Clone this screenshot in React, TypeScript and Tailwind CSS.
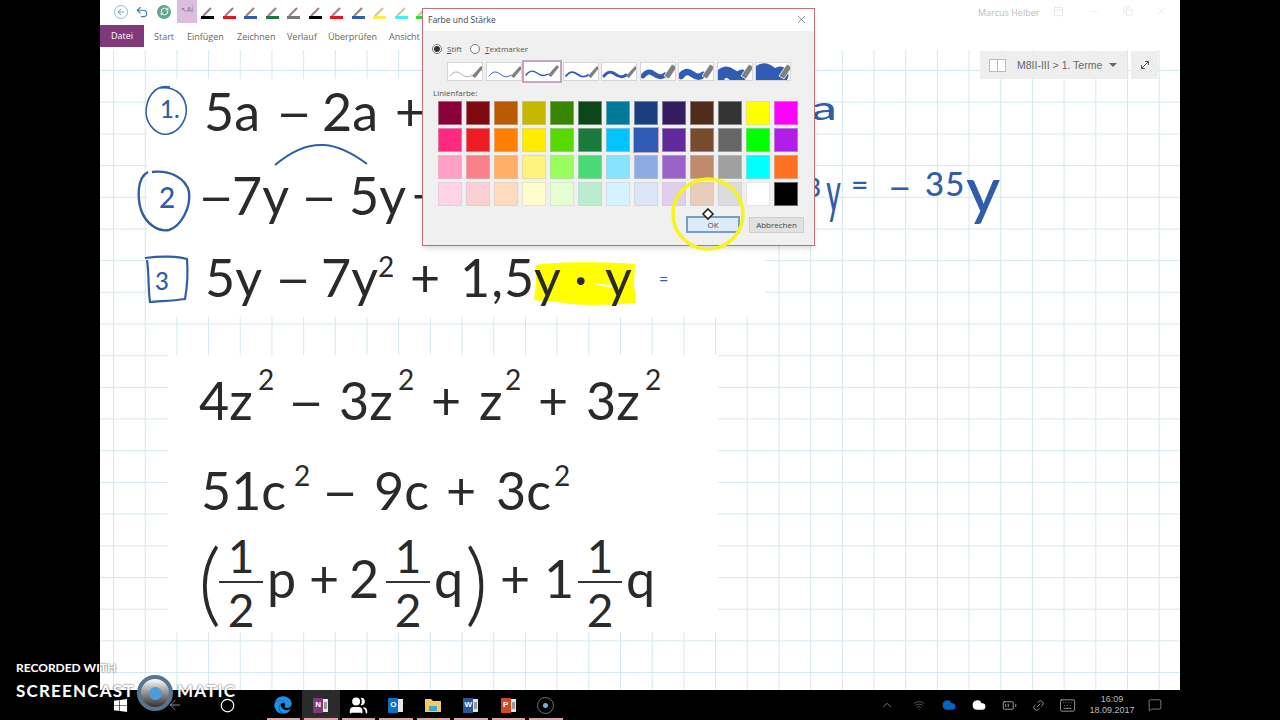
import React from 'react';
import { ArrowLeft, ChevronUp, Cloud, Keyboard, MessageSquare, Minus, RefreshCw, Undo2, Users, Wifi, X, Link2, BatteryMedium, Copy, PanelTop, MoveDiagonal, Circle } from 'lucide-react';
import { FaEdge, FaWindows } from 'react-icons/fa';

const PEN_COLORS = [
  'bg-[#000000]', 'bg-[#e8141c]', 'bg-[#2f5db5]', 'bg-[#197a3c]', 'bg-[#777777]', 'bg-[#000000]',
  'bg-[#e8141c]', 'bg-[#2f5db5]', 'bg-[#ffee44]', 'bg-[#44eeff]', 'bg-[#33dd33]',
];

const TABS = [
  { label: 'Start', cls: 'w-[33px]' },
  { label: 'Einfügen', cls: 'w-[50px]' },
  { label: 'Zeichnen', cls: 'w-[50px]' },
  { label: 'Verlauf', cls: 'w-[41px]' },
  { label: 'Überprüfen', cls: 'w-[61px]' },
  { label: 'Ansicht', cls: 'w-[33px]' },
];

const SWATCHES = [
  ['bg-[#8a0038]', 'bg-[#7f0a12]', 'bg-[#b95b00]', 'bg-[#c6b800]', 'bg-[#3a8500]', 'bg-[#0f4619]', 'bg-[#007a9a]', 'bg-[#1b3f7e]', 'bg-[#351c5e]', 'bg-[#4f2c1c]', 'bg-[#333333]', 'bg-[#ffff00]', 'bg-[#ff00ff]'],
  ['bg-[#ff2a7f]', 'bg-[#ee1c25]', 'bg-[#ff7f00]', 'bg-[#ffec00]', 'bg-[#57d900]', 'bg-[#197a3c]', 'bg-[#00c4ff]', 'bg-[#2f5db5]', 'bg-[#60299c]', 'bg-[#764b30]', 'bg-[#666666]', 'bg-[#00ff00]', 'bg-[#b01ee8]'],
  ['bg-[#ff9fc6]', 'bg-[#f98088]', 'bg-[#ffaf66]', 'bg-[#fff37f]', 'bg-[#99ff5c]', 'bg-[#4bd977]', 'bg-[#88e3ff]', 'bg-[#8cabe2]', 'bg-[#9b63c9]', 'bg-[#c08a6d]', 'bg-[#a0a0a0]', 'bg-[#00ffff]', 'bg-[#ff7020]'],
  ['bg-[#ffd4e6]', 'bg-[#fbd0d3]', 'bg-[#ffdcc0]', 'bg-[#fffdcc]', 'bg-[#e5ffd2]', 'bg-[#bcecd0]', 'bg-[#d2f3ff]', 'bg-[#dbe5f6]', 'bg-[#e1cdee]', 'bg-[#e8cdbd]', 'bg-[#dcdcdc]', 'bg-[#ffffff]', 'bg-[#000000]'],
];

const THICKNESS = [0.6, 1, 1.5, 2, 3, 5, 6.5, 11, 17];

const T = 'absolute text-[52px] leading-none text-[#2a2a2a] font-["Lato",sans-serif] whitespace-pre';
const M = `${T} scale-x-[1.25]`;
const S = 'absolute text-[28px] leading-none text-[#2a2a2a] font-["Lato",sans-serif]';
const INK = 'absolute leading-none text-[#2f5da8] font-["Lato",sans-serif] font-medium whitespace-pre';

function PenThumb({ width, index }: { width: number; index: number }) {
  const selected = index === 2;
  const big = index >= 5;
  return (
    <div className={`relative w-[36px] h-[19px] overflow-hidden bg-white ${selected ? 'outline-2 outline-[#c9a3c4]' : 'border border-[#d6d6d6]'}`}>
      <svg width="36" height="19" viewBox="0 0 36 19" className="absolute left-0 top-0">
        <path
          d="M2 13 C6 8 9 8 13 11 S20 15 24 12"
          fill="none"
          stroke={index === 0 ? '#777777' : '#2f5db5'}
          strokeWidth={width}
          strokeLinecap="round"
        />
        <path
          d={big ? 'M23 13 L31 1 L36 4 L28 16 Z' : 'M24 13 L33 3 L35 5 L27 15 Z'}
          fill="#808080"
          stroke={big ? '#ffffff' : 'none'}
          strokeWidth="0.8"
        />
      </svg>
    </div>
  );
}

function OfficeTile({ letter, color, lines }: { letter: string; color: string; lines?: boolean }) {
  return (
    <div className="relative w-[15px] h-[15px]">
      <div className="absolute right-0 top-[1px] w-[10px] h-[13px] bg-white/90" />
      <div className={`absolute left-0 top-0 w-[10px] h-[15px] ${color} flex items-center justify-center text-[8px] font-bold text-white font-["Liberation_Sans",sans-serif]`}>
        {letter}
      </div>
      {lines && <div className="absolute right-[1px] top-[4px] w-[3px] h-[7px] bg-[#999999]" />}
    </div>
  );
}

function Frac({ cls }: { cls: string }) {
  return (
    <div className={`absolute flex flex-col items-center w-[44px] text-[46px] leading-none text-[#2a2a2a] font-["Lato",sans-serif] ${cls}`}>
      <span className="h-[48px]">1</span>
      <div className="w-full h-[2px] bg-[#333333]" />
      <span className="mt-[4px]">2</span>
    </div>
  );
}

function TaskItem({ active, children }: { active?: boolean; children: React.ReactNode }) {
  return (
    <div className={`relative flex items-center justify-center h-full w-[37.5px] ${active ? 'bg-[#2b2b2b]' : ''}`}>
      {children}
      <div className="absolute left-[2px] right-[2px] bottom-0 h-[2px] bg-[#d8a8a8]" />
    </div>
  );
}

export default function App() {
  return (
    <div className='relative w-[1280px] h-[720px] overflow-hidden bg-black flex flex-col font-["Open_Sans",sans-serif]'>
      <div className="flex-1 flex min-h-0">
        <div className="w-[100px] bg-black" />
        <div className="flex-1 flex flex-col bg-white min-w-0">
          {/* title + ribbon */}
          <div className="relative h-[50px] shrink-0">
            <div className="h-[25px] flex items-center pl-[14px]">
              <div className="w-[14px] h-[14px] rounded-full border border-[#9bb8cf] bg-white flex items-center justify-center mr-[7px] -mt-[2px]">
                <ArrowLeft size={10} strokeWidth={2} className="text-[#5b8fb8]" />
              </div>
              <Undo2 size={14} strokeWidth={2} className="text-[#3f7da8] mr-[8px] -mt-[2px]" />
              <div className="w-[14px] h-[14px] rounded-full bg-[#5fa690] flex items-center justify-center mr-[6px] -mt-[2px]">
                <RefreshCw size={9} strokeWidth={2.5} className="text-white" />
              </div>
              <div className="w-[20px] h-[23px] bg-[#dcbcdf] -mt-[2px] mr-[4px] flex items-start justify-center text-[7px] text-[#777777] pt-[5px]">
                ↖Aİ
              </div>
              <div className="flex gap-[8.5px]">
                {PEN_COLORS.map((c, i) => (
                  <div key={i} className="relative w-[13px] h-[13px]">
                    <svg width="13" height="11" viewBox="0 0 13 11" className="absolute left-0 top-0">
                      <path d="M2 10 L10 2" stroke={i > 7 ? '#d8c48a' : '#a08078'} strokeWidth="2.2" />
                    </svg>
                    <div className={`absolute left-0 bottom-0 w-[13px] h-[3px] ${c}`} />
                  </div>
                ))}
              </div>
            </div>
            <div className="h-[22px] flex items-center text-[9px] text-[#666666]">
              <div className="w-[44px] h-full bg-[#80397b] text-white flex items-center justify-center">Datei</div>
              <div className="w-[10px]" />
              {TABS.map((t) => (
                <div key={t.label} className={`${t.cls} text-left pt-[1px]`}>{t.label}</div>
              ))}
            </div>
            <span className="absolute left-[878px] top-[6px] text-[9px] text-[#bbbbbb]">Marcus Helber</span>
            <PanelTop size={11} strokeWidth={1} className="absolute left-[953px] top-[6px] text-[#cccccc]" />
            <Minus size={11} strokeWidth={1} className="absolute left-[989px] top-[6px] text-[#dddddd]" />
            <Copy size={10} strokeWidth={1} className="absolute left-[1023px] top-[6px] text-[#cccccc]" />
            <X size={12} strokeWidth={1} className="absolute left-[1055px] top-[5px] text-[#dddddd]" />
          </div>

          {/* page canvas */}
          <div className="relative flex-1 bg-white bg-[linear-gradient(to_right,#d5e8ef_1px,transparent_1px),linear-gradient(to_bottom,#d5e8ef_1px,transparent_1px)] bg-[size:31.7px_31.7px] bg-[position:13px_20px]">
            <div className="absolute left-[47px] top-[29px] w-[618px] h-[238px] bg-white" />
            <div className="absolute left-[68px] top-[305px] w-[550px] h-[277px] bg-white" />

            <svg width="1080" height="640" viewBox="100 50 1080 640" className="absolute left-0 top-0" fill="none">
              <path d="M536 265 C560 261 610 262 635 264 L634 284 L636 303 C600 306 570 305 566 303 L534 300 L536 284 Z" fill="#ffff00" />
              <path d="M590 283 L612 285 L612 288 Z" fill="#ffffff" />
              <path d="M170 87 C153 84 146 100 146 113 C147 126 158 136 168 134 C180 132 188 118 186 106 C184 94 174 86 160 88" stroke="#2f5da8" strokeWidth="1.6" />
              <path d="M148 172 C136 178 138 200 141 210 C146 224 158 232 169 230 C181 226 191 208 189 192 C186 178 170 170 152 172" stroke="#2f5da8" strokeWidth="2.4" />
              <path d="M145 258 C160 256 178 256 187 259 C188 272 187 288 185 299 C172 301 160 301 150 302 C148 288 149 272 147 260" stroke="#2f5da8" strokeWidth="2.2" />
              <path d="M275 165 C295 148 310 144 324 145 C340 146 355 155 367 164" stroke="#2f5da8" strokeWidth="2" />
            </svg>

            {/* first block */}
            <span className={`${T} left-[104px] top-[35px]`}>5a</span>
            <span className={`${M} left-[179px] top-[35px]`}>–</span>
            <span className={`${T} left-[222px] top-[35px]`}>2a</span>
            <span className={`${T} left-[295px] top-[35px]`}>+</span>

            <span className={`${M} left-[101px] top-[119px]`}>–</span>
            <span className={`${T} left-[132px] top-[119px]`}>7y</span>
            <span className={`${M} left-[204px] top-[119px]`}>–</span>
            <span className={`${T} left-[249px] top-[119px]`}>5y</span>
            <span className={`${T} left-[312px] top-[119px]`}>+</span>

            <span className={`${T} left-[105px] top-[201px]`}>5y</span>
            <span className={`${M} left-[178px] top-[201px]`}>–</span>
            <span className={`${T} left-[221px] top-[201px]`}>7y</span>
            <span className={`${S} left-[278px] top-[202px]`}>2</span>
            <span className={`${T} left-[310px] top-[201px]`}>+</span>
            <span className={`${T} left-[360px] top-[201px] tracking-[1px]`}>1,5</span>
            <span className={`${T} left-[434px] top-[201px]`}>y</span>
            <span className={`${T} left-[474px] top-[201px]`}>·</span>
            <span className={`${T} left-[505px] top-[201px]`}>y</span>

            <span className={`${INK} left-[60px] top-[47px] text-[24px]`}>1.</span>
            <span className={`${INK} left-[59px] top-[133px] text-[28px]`}>2</span>
            <span className={`${INK} left-[55px] top-[219px] text-[24px]`}>3</span>
            <span className={`${INK} left-[559px] top-[221px] text-[16px] font-normal`}>=</span>

            <span className={`${INK} left-[716px] top-[42px] text-[32px] scale-x-[1.6]`}>a</span>
            <span className={`${INK} left-[706px] top-[124px] text-[26px]`}>3</span>
            <span className={`${INK} left-[719px] top-[113px] text-[56px] scale-x-50`}>y</span>
            <span className={`${INK} left-[751px] top-[119px] text-[30px]`}>=</span>
            <span className={`${M} !text-[#2f5da8] !text-[34px] left-[790px] top-[119px] font-medium`}>–</span>
            <span className={`${INK} left-[825px] top-[117px] text-[33px] tracking-[1px]`}>35</span>
            <span className={`${INK} left-[866px] top-[105px] text-[66px]`}>y</span>

            {/* second block */}
            <span className={`${T} left-[99px] top-[324px]`}>4z</span>
            <span className={`${S} left-[158px] top-[315px]`}>2</span>
            <span className={`${M} left-[191px] top-[324px]`}>–</span>
            <span className={`${T} left-[239px] top-[324px]`}>3z</span>
            <span className={`${S} left-[298px] top-[315px]`}>2</span>
            <span className={`${T} left-[331px] top-[324px]`}>+</span>
            <span className={`${T} left-[379px] top-[324px]`}>z</span>
            <span className={`${S} left-[405px] top-[315px]`}>2</span>
            <span className={`${T} left-[438px] top-[324px]`}>+</span>
            <span className={`${T} left-[486px] top-[324px]`}>3z</span>
            <span className={`${S} left-[545px] top-[315px]`}>2</span>

            <span className={`${T} left-[101px] top-[414px]`}>51c</span>
            <span className={`${S} left-[194px] top-[411px]`}>2</span>
            <span className={`${M} left-[225px] top-[414px]`}>–</span>
            <span className={`${T} left-[274px] top-[414px]`}>9c</span>
            <span className={`${T} left-[346px] top-[414px]`}>+</span>
            <span className={`${T} left-[396px] top-[414px]`}>3c</span>
            <span className={`${S} left-[454px] top-[411px]`}>2</span>

            <span className={`${T} left-[98px] top-[485px] text-[90px] font-light`}>(</span>
            <Frac cls="left-[119px] top-[483px]" />
            <span className={`${T} left-[167px] top-[502px]`}>p</span>
            <span className={`${T} left-[209px] top-[502px]`}>+</span>
            <span className={`${T} left-[249px] top-[502px]`}>2</span>
            <Frac cls="left-[286px] top-[483px]" />
            <span className={`${T} left-[334px] top-[502px]`}>q</span>
            <span className={`${T} left-[365px] top-[485px] text-[90px] font-light`}>)</span>
            <span className={`${T} left-[400px] top-[502px]`}>+</span>
            <span className={`${T} left-[444px] top-[502px]`}>1</span>
            <Frac cls="left-[478px] top-[483px]" />
            <span className={`${T} left-[526px] top-[502px]`}>q</span>

            {/* notebook picker */}
            <div className="absolute left-[880px] top-[1px] flex gap-[4px] text-[#666666]">
              <div className="w-[147px] h-[28px] bg-[#eeeeee] flex items-center pl-[9px]">
                <div className="w-[17px] h-[13px] bg-white border border-[#bbbbbb] flex justify-center">
                  <div className="w-px h-full bg-[#bbbbbb]" />
                </div>
                <span className='ml-[11px] pt-[1px] text-[10.5px] font-["Liberation_Sans",sans-serif]'>M8II-III &gt; 1. Terme</span>
                <div className="ml-[7px] w-0 h-0 border-l-[4px] border-r-[4px] border-t-[4px] border-l-transparent border-r-transparent border-t-[#666666]" />
              </div>
              <div className="w-[27px] h-[28px] bg-[#eeeeee] flex items-center justify-center">
                <MoveDiagonal size={12} strokeWidth={2} className="text-[#555555]" />
              </div>
            </div>
          </div>
        </div>
        <div className="w-[100px] bg-black" />
      </div>

      {/* taskbar */}
      <div className="h-[30px] shrink-0 bg-black flex items-center text-white">
        <div className="w-[128px] flex justify-end">
          <FaWindows size={15} />
        </div>
        <div className="w-[39px]" />
        <ArrowLeft size={16} strokeWidth={1} className="text-[#cccccc]" />
        <div className="w-[37px]" />
        <Circle size={15} strokeWidth={2} />
        <div className="w-[29.5px]" />
        <div className="flex h-full">
          <TaskItem><FaEdge size={18} className="text-[#1e90e8]" /></TaskItem>
          <TaskItem active><OfficeTile letter="N" color="bg-[#80397b]" lines /></TaskItem>
          <TaskItem><Users size={19} fill="#ffffff" className="text-white" /></TaskItem>
          <TaskItem><OfficeTile letter="O" color="bg-[#0a72c6]" /></TaskItem>
          <TaskItem>
            <svg width="16" height="14" viewBox="0 0 16 14">
              <path d="M0 1 H6 L8 3 H16 V14 H0 Z" fill="#f2cc62" />
              <rect x="4" y="8" width="8" height="5" fill="#3fa9c9" />
            </svg>
          </TaskItem>
          <TaskItem><OfficeTile letter="W" color="bg-[#2b579a]" lines /></TaskItem>
          <TaskItem><OfficeTile letter="P" color="bg-[#d24726]" lines /></TaskItem>
          <TaskItem>
            <div className="w-[17px] h-[17px] rounded-full border border-[#5b7f9a] flex items-center justify-center">
              <div className="w-[5px] h-[5px] rounded-full bg-[#6fb3e0]" />
            </div>
          </TaskItem>
        </div>
        <div className="flex-1" />
        <div className="flex items-center text-[#cccccc] mr-[118px]">
          <ChevronUp size={14} strokeWidth={1} className="mr-[19px]" />
          <Wifi size={12} strokeWidth={1.2} className="mr-[17px] text-[#888888]" />
          <Cloud size={14} fill="#0a62c0" className="text-[#0a62c0] mr-[16px]" />
          <Cloud size={14} fill="#ffffff" className="text-white mr-[16px]" />
          <BatteryMedium size={15} strokeWidth={1.2} className="mr-[15px]" />
          <Link2 size={13} strokeWidth={1.2} className="mr-[14px] -rotate-45" />
          <Keyboard size={17} strokeWidth={1} className="mr-[13px]" />
          <div className='w-[46px] flex flex-col items-center text-[9px] leading-[11px] text-[#bbbbbb] mr-[13px] font-["Liberation_Sans",sans-serif]'>
            <span>16:09</span>
            <span>18.09.2017</span>
          </div>
          <MessageSquare size={14} strokeWidth={1} />
        </div>
      </div>

      {/* colour dialog */}
      <div className="absolute left-[422px] top-[8px] w-[393px] h-[238px] bg-[#f0f0f0] border border-[#c0707c] shadow-md text-[#444444]">
        <div className="relative h-[22px] bg-white flex items-center pl-[5px] text-[8.5px]">
          Farbe und Stärke
          <X size={13} strokeWidth={1} className="absolute right-[6px] top-[4px] text-[#333333]" />
        </div>
        <div className="flex items-center h-[15px] mt-[10px] pl-[9px] text-[8px] text-[#555555]">
          <div className="w-[10px] h-[10px] rounded-full border border-[#777777] bg-white flex items-center justify-center">
            <div className="w-[6px] h-[6px] rounded-full bg-[#333333]" />
          </div>
          <span className="ml-[5px] w-[23px]"><u>S</u>tift</span>
          <div className="w-[10px] h-[10px] rounded-full border border-[#777777] bg-white" />
          <span className="ml-[5px]"><u>T</u>extmarker</span>
        </div>
        <div className="flex gap-[2.5px] pl-[24px] mt-[6px]">
          {THICKNESS.map((w, i) => (
            <PenThumb key={i} width={w} index={i} />
          ))}
        </div>
        <div className="mt-[6px] pl-[10px] text-[8px] leading-[11px] text-[#555555]">Linienfarbe:</div>
        <div className="flex flex-col gap-[2.9px] pl-[15px] mt-[3px]">
          {SWATCHES.map((row, r) => (
            <div key={r} className="flex gap-[4px]">
              {row.map((c, i) => (
                <div
                  key={i}
                  className={`w-[24px] h-[24px] ${c} ${r === 1 && i === 7 ? 'outline outline-[#c9a3c4]' : 'border border-[#cccccc]/50'}`}
                />
              ))}
            </div>
          ))}
        </div>
        <div className="absolute right-[10px] bottom-[12px] flex items-end gap-[9px] text-[8px]">
          <div className="w-[54px] h-[17px] bg-[#dcecfb] border-2 border-[#7a9cc8] flex items-center justify-center">OK</div>
          <div className="w-[55px] h-[16px] bg-[#e1e1e1] border border-[#cfcfcf] flex items-center justify-center">Abbrechen</div>
        </div>
      </div>

      {/* cursor highlight */}
      <svg width="80" height="80" viewBox="0 0 80 80" className="absolute left-[668px] top-[175px]" fill="none">
        <circle cx="40" cy="39" r="35" stroke="#f8f41a" strokeWidth="3.5" />
        <path d="M40 34 L45 39 L40 44 L35 39 Z" stroke="#222222" strokeWidth="1.6" fill="#ffffff" />
      </svg>

      {/* recorder watermark */}
      <span className='absolute left-[16px] top-[662px] text-[12px] font-bold leading-none text-white [text-shadow:0_0_2px_#222222] font-["Lato",sans-serif]'>RECORDED WITH</span>
      <span className='absolute left-[16px] top-[682px] text-[17px] font-bold leading-none tracking-[1.2px] text-white [text-shadow:0_0_2px_#222222] font-["Lato",sans-serif]'>SCREENCAST</span>
      <span className='absolute left-[177px] top-[682px] text-[17px] font-bold leading-none tracking-[1.2px] text-white [text-shadow:0_0_2px_#222222] font-["Lato",sans-serif]'>MATIC</span>
      <div className="absolute left-[137px] top-[675px] w-[36px] h-[36px] rounded-full border-[4px] border-[#56758f] bg-gradient-to-b from-white to-[#333333] flex items-center justify-center">
        <div className="w-[13px] h-[13px] rounded-full bg-[#4f9ad8]" />
      </div>
    </div>
  );
}
